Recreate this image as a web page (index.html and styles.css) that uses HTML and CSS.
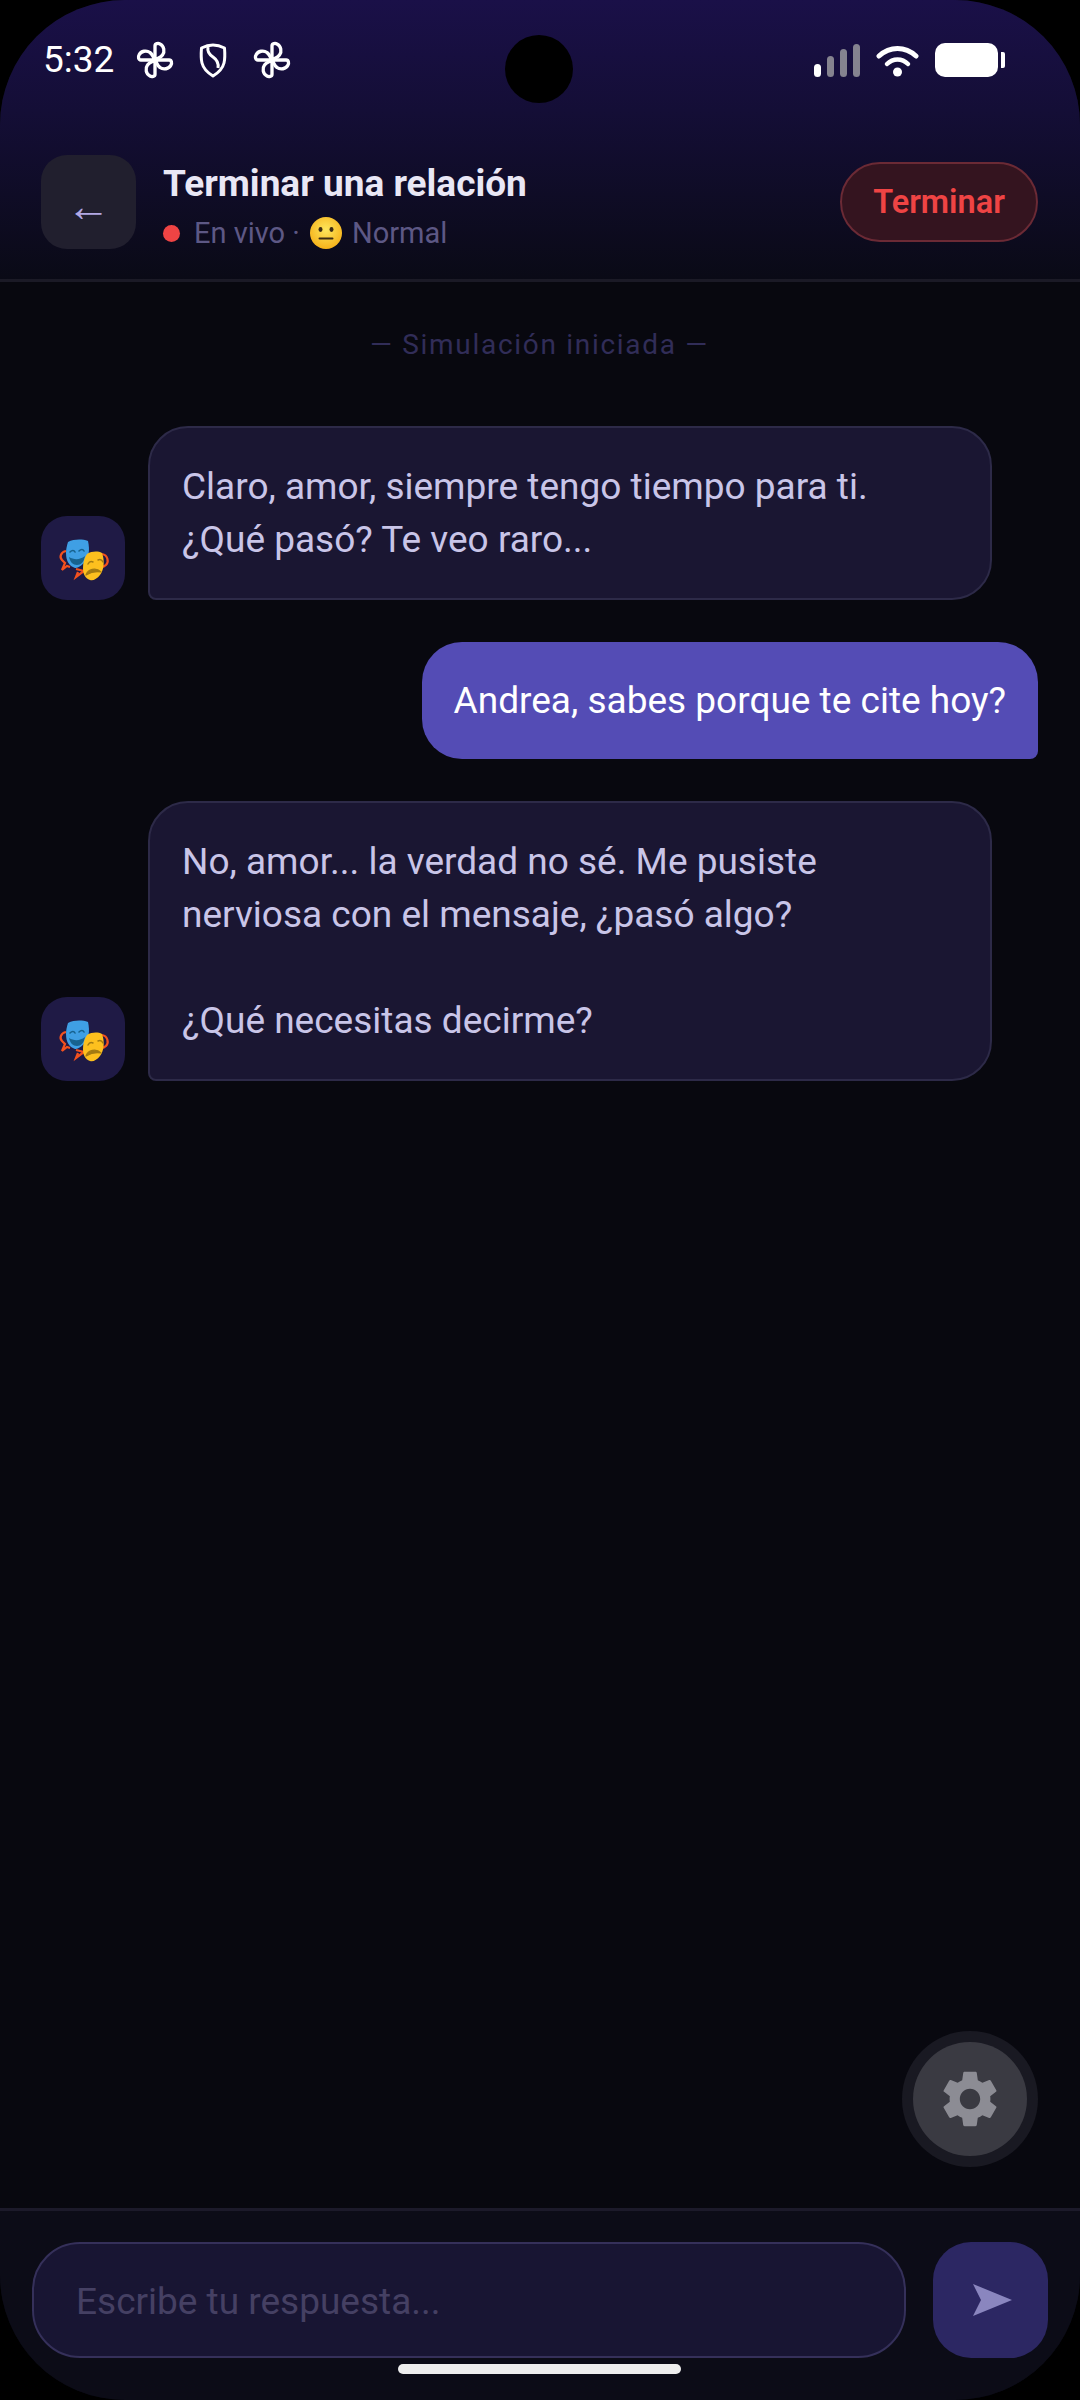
FILE: index.html
```html
<!DOCTYPE html>
<html lang="es">
<head>
<meta charset="utf-8">
<title>Terminar una relación</title>
<link rel="stylesheet" href="styles.css">
</head>
<body>
<svg class="defs" width="0" height="0">
  <defs>
    <g id="petal">
      <path d="M12 12V3.500C12 2 14 1.800 15 2.400 17.500 3.600 18 7 16.500 9 15.500 10.500 13.500 11 12 12Z"/>
    </g>
    <g id="pinwheel" fill="none" stroke="#fff" stroke-width="2" stroke-linejoin="round">
      <use href="#petal"/>
      <use href="#petal" transform="rotate(90 12 12)"/>
      <use href="#petal" transform="rotate(180 12 12)"/>
      <use href="#petal" transform="rotate(270 12 12)"/>
    </g>
    <g id="masks">
      <path d="M25 35c-5 1-7 6-4 9l3 3-3 7 5-4 3 1" fill="none" stroke="#f4511e" stroke-width="2.200"/>
      <path d="M35 53l8 2-8 6 2-5" fill="none" stroke="#f4511e" stroke-width="2.200"/>
      <path d="M61 38c6 1 7 8 4 11l-3 2" fill="none" stroke="#f4511e" stroke-width="2.200"/>
      <path d="M27 26c6-3 14-3 20-1 2 9 1 17-4 22-4 4-7 5-9 5-6-2-9-7-9-15 0-4 1-8 2-11z" fill="#3f9fe4"/>
      <path d="M29 36c2-2 4-2 5 0M38 35c2-2 4-2 5 0" fill="none" stroke="#17628f" stroke-width="1.600" stroke-linecap="round"/>
      <path d="M28 41c5 3 11 3 16-1-1 6-4 9-8 9-4 0-7-3-8-8z" fill="#17628f"/>
      <path d="M46 38c5-3 11-3 15-1 3 8 2 17-2 22-3 4-7 6-10 5-5-2-7-6-7-12 0-5 1-10 4-14z" fill="#fdc01e"/>
      <path d="M47 48c1-2 3-3 5-2M57 44c2-1 4 0 5 2" fill="none" stroke="#a37b12" stroke-width="1.500" stroke-linecap="round"/>
      <path d="M45 59c2-6 10-8 15-3-5-1-10 0-15 3z" fill="#a37b12" stroke="#a37b12" stroke-width="1.200" stroke-linejoin="round"/>
    </g>
  </defs>
</svg>

<div class="screen">
  <header class="top">
    <div class="status">
      <div class="status-left">
        <span class="time">5:32</span>
        <svg class="st-pin" viewBox="0 0 24 24"><use href="#pinwheel"/></svg>
        <svg class="st-shield" viewBox="0 0 28 35">
          <path d="M14 2c4 0 8 1.200 11.500 3 .5 6 .5 11-.5 15-1.500 6-6 10-11 13C9 30 4.500 26 3 20 2 16 2 11 2.500 5 6 3.200 10 2 14 2Z" fill="none" stroke="#fff" stroke-width="3" stroke-linejoin="round"/>
          <path d="M9 4c-1 5 2 8 5 10 3 2 6 5 5 11" fill="none" stroke="#fff" stroke-width="3"/>
        </svg>
        <svg class="st-pin" viewBox="0 0 24 24"><use href="#pinwheel"/></svg>
      </div>
      <div class="status-right">
        <div class="signal">
          <i class="bar bar1"></i><i class="bar bar2"></i><i class="bar bar3"></i><i class="bar bar4"></i>
        </div>
        <svg class="wifi" viewBox="0 0 43 34">
          <path d="M3 13C14 3 29 3 40 13" fill="none" stroke="#fff" stroke-width="5" stroke-linecap="round"/>
          <path d="M11 21C17 15 26 15 32 21" fill="none" stroke="#fff" stroke-width="4.500" stroke-linecap="round"/>
          <circle cx="21.500" cy="29" r="4.500" fill="#fff"/>
        </svg>
        <div class="battery"><i class="battery-cap"></i></div>
      </div>
    </div>
    <div class="head-row">
      <div class="back">←</div>
      <div class="head-text">
        <div class="title">Terminar una relación</div>
        <div class="sub">
          <i class="live-dot"></i>
          <span>En vivo ·</span>
          <svg class="neutral" viewBox="0 0 32 32">
            <defs>
              <radialGradient id="face" cx="50%" cy="40%" r="60%">
                <stop offset="0" stop-color="#fde65c"/>
                <stop offset="1" stop-color="#f6b21a"/>
              </radialGradient>
            </defs>
            <circle cx="16" cy="16" r="16" fill="url(#face)"/>
            <ellipse cx="10.500" cy="12.500" rx="2" ry="2.400" fill="#3d2c14"/>
            <ellipse cx="21.500" cy="12.500" rx="2" ry="2.400" fill="#3d2c14"/>
            <rect x="8.500" y="20.500" width="15" height="2" rx="1" fill="#3d2c14"/>
          </svg>
          <span>Normal</span>
        </div>
      </div>
      <div class="end-btn">Terminar</div>
    </div>
  </header>

  <main class="chat">
    <div class="started">— Simulación iniciada —</div>

    <div class="msg">
      <div class="avatar"><svg viewBox="0 0 84 84"><use href="#masks"/></svg></div>
      <div class="bubble">Claro, amor, siempre tengo tiempo para ti. ¿Qué pasó? Te veo raro...</div>
    </div>

    <div class="msg msg-me">
      <div class="bubble bubble-me">Andrea, sabes porque te cite hoy?</div>
    </div>

    <div class="msg">
      <div class="avatar"><svg viewBox="0 0 84 84"><use href="#masks"/></svg></div>
      <div class="bubble">No, amor... la verdad no sé. Me pusiste nerviosa con el mensaje, ¿pasó algo?<br><br>¿Qué necesitas decirme?</div>
    </div>
  </main>

  <footer class="composer">
    <div class="input">Escribe tu respuesta...</div>
    <div class="send">
      <svg viewBox="0 0 40 32"><polygon points="1,0 40,16 1,32 9,16"/></svg>
    </div>
  </footer>

  <!-- floating stuff and system overlays -->
  <div class="fab">
    <svg viewBox="0 0 24 24"><path d="M19.140 12.940c.04-.3.06-.61.06-.94 0-.32-.02-.64-.07-.94l2.030-1.580c.18-.14.23-.41.120-.61l-1.920-3.320c-.12-.22-.37-.29-.59-.22l-2.390.96c-.5-.38-1.030-.7-1.620-.94l-.36-2.540c-.04-.24-.24-.41-.48-.41h-3.840c-.24 0-.43.17-.47.41l-.36 2.540c-.59.24-1.130.57-1.620.94l-2.390-.96c-.22-.08-.47 0-.59.22L2.740 8.870c-.12.21-.08.47.12.61l2.030 1.580c-.05.3-.09.63-.09.94s.02.64.07.94l-2.030 1.580c-.18.14-.23.41-.12.61l1.920 3.320c.12.22.37.29.59.22l2.390-.96c.5.38 1.030.7 1.620.94l.36 2.540c.05.24.24.41.48.41h3.840c.24 0 .44-.17.47-.41l.36-2.540c.59-.24 1.130-.56 1.620-.94l2.390.96c.22.08.47 0 .59-.22l1.920-3.320c.12-.22.07-.47-.12-.61l-2.010-1.580zM12 15.600c-1.980 0-3.600-1.620-3.600-3.600s1.620-3.600 3.600-3.600 3.600 1.620 3.600 3.600-1.620 3.600-3.600 3.600z"/></svg>
  </div>
  <div class="camera"></div>
  <div class="home-bar"></div>
</div>
</body>
</html>
```

FILE: styles.css
```css
* { box-sizing: border-box; }
html, body { margin: 0; padding: 0; background: #000; }
body { font-family: Roboto, "Noto Sans", sans-serif; width: 1080px; height: 2400px; overflow: hidden; }
.defs { position: absolute; }

.screen {
  position: relative;
  width: 1080px;
  height: 2400px;
  border-radius: 125px;
  overflow: hidden;
  background: #08080f;
  display: flex;
  flex-direction: column;
}

/* header + status bar */
.top {
  height: 282px;
  background: linear-gradient(180deg, #1a1048 0%, #140e36 40%, #0a0a16 100%);
  border-bottom: 3px solid #1b1a26;
  flex: none;
}
.status {
  display: flex;
  justify-content: space-between;
  align-items: center;
  height: 34px;
  margin-top: 43px;
  padding: 0 82px 0 43px;
}
.status-left { display: flex; align-items: center; }
.status-right { display: flex; align-items: center; }
.time { color: #fff; font-size: 37px; width: 92px; line-height: 34px; }
.st-pin { width: 40px; height: 40px; }
.st-shield { width: 28px; height: 35px; margin: 0 25px 0 24px; }

.signal { display: flex; align-items: flex-end; gap: 6px; height: 33px; }
.bar { display: block; width: 7px; border-radius: 4px; background: #85838f; }
.bar1 { height: 13px; background: #fff; }
.bar2 { height: 21px; }
.bar3 { height: 28px; }
.bar4 { height: 33px; }
.wifi { width: 43px; height: 34px; margin: 0 16px 0 16px; }
.battery { position: relative; width: 63px; height: 34px; border-radius: 10px; background: #fff; }
.battery-cap { position: absolute; left: 66px; top: 9px; width: 4px; height: 16px; border-radius: 0 2px 2px 0; background: #fff; }

.head-row {
  display: flex;
  align-items: center;
  padding: 0 42px 0 41px;
  margin-top: 76px;
}
.back {
  width: 95px;
  height: 94px;
  border-radius: 26px;
  background: #211f2e;
  color: #b2a8e4;
  font-size: 44px;
  padding-top: 8px;
  display: flex;
  align-items: center;
  justify-content: center;
  flex: none;
}
.head-text { margin-left: 27px; flex: 1; padding-top: 9px; }
.title { color: #e9e7f5; font-size: 37px; font-weight: 700; line-height: 44px; }
.sub { display: flex; align-items: center; color: #5d5885; font-size: 29px; line-height: 36px; margin-top: 9px; }
.live-dot { width: 17px; height: 17px; border-radius: 50%; background: #ef4444; margin-right: 14px; }
.neutral { width: 32px; height: 32px; margin: 0 10px 0 10px; }
.end-btn {
  width: 198px;
  height: 80px;
  border-radius: 40px;
  border: 2px solid #6b2a35;
  background: #34141f;
  color: #ef4444;
  font-size: 32.500px;
  font-weight: 600;
  display: flex;
  align-items: center;
  justify-content: center;
}

/* messages */
.chat { flex: 1; padding: 0 42px 0 41px; }
.started {
  text-align: center;
  color: #312d58;
  font-size: 28px;
  letter-spacing: 1.700px;
  line-height: 34px;
  margin-top: 46px;
  margin-bottom: 64px;
}
.msg { display: flex; align-items: flex-end; gap: 23px; margin-bottom: 42px; }
.msg-me { justify-content: flex-end; }
.avatar {
  width: 84px;
  height: 84px;
  border-radius: 26px;
  background: #1f1a45;
  flex: none;
}
.avatar svg { display: block; width: 84px; height: 84px; }
.bubble {
  width: 844px;
  padding: 32px 32px;
  background: #1a1632;
  border: 2px solid #2d2a48;
  border-radius: 40px 40px 40px 8px;
  color: #c9c5e8;
  font-size: 37px;
  line-height: 53px;
}
.bubble-me {
  width: auto;
  padding: 32px 32px;
  background: #544cb5;
  border: none;
  border-radius: 40px 40px 8px 40px;
  color: #fff;
}

/* input */
.composer {
  flex: none;
  height: 192px;
  border-top: 3px solid #1c1a2a;
  background: #0c0c17;
  display: flex;
  gap: 27px;
  padding: 31px 32px 0 32px;
}
.input {
  flex: 1;
  height: 116px;
  border-radius: 48px;
  border: 2px solid #35305a;
  background: #181533;
  color: #454063;
  font-size: 37px;
  line-height: 116px;
  padding-left: 42px;
}
.send {
  width: 115px;
  height: 116px;
  border-radius: 38px;
  background: #2c2763;
  display: flex;
  align-items: center;
  justify-content: center;
}
.send svg { width: 40px; height: 32px; fill: #8a86bf; margin-left: 2px; }

/* overlays */
.fab {
  position: absolute;
  left: 913px;
  top: 2042px;
  width: 114px;
  height: 114px;
  border-radius: 50%;
  background: #3a3a42;
  box-shadow: 0 0 0 11px #191922;
  display: flex;
  align-items: center;
  justify-content: center;
}
.fab svg { width: 68px; height: 68px; fill: #8c8c94; }
.camera {
  position: absolute;
  left: 505px;
  top: 35px;
  width: 68px;
  height: 68px;
  border-radius: 50%;
  background: #000;
}
.home-bar {
  position: absolute;
  left: 398px;
  top: 2364px;
  width: 283px;
  height: 10px;
  border-radius: 5px;
  background: #eeeeee;
}
```
